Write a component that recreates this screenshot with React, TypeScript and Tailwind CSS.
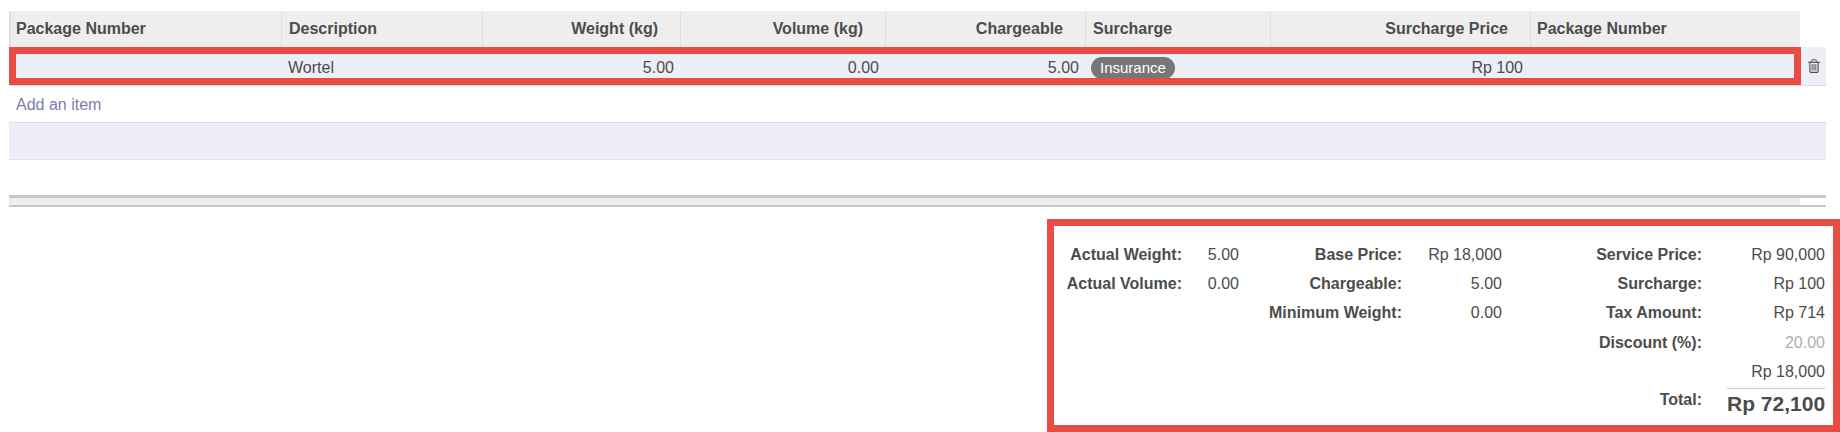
const font = "[font-family:'Liberation_Sans',Arial,sans-serif]";

const headers = [
  { label: 'Package Number', width: 'w-[271px]', right: false },
  { label: 'Description', width: 'w-[201px]', right: false },
  { label: 'Weight (kg)', width: 'w-[198px]', right: true },
  { label: 'Volume (kg)', width: 'w-[205px]', right: true },
  { label: 'Chargeable', width: 'w-[200px]', right: true },
  { label: 'Surcharge', width: 'w-[185px]', right: false },
  { label: 'Surcharge Price', width: 'w-[260px]', right: true },
  { label: 'Package Number', width: 'w-[269px]', right: false },
];

function TrashIcon() {
  // fa-trash-o, drawn by hand
  return (
    <svg width="12" height="14" viewBox="0 0 13 15" fill="none" className="-mt-[3px] text-[#4c4c4c]" aria-hidden="true">
      <path d="M0.3 3.5H12.7" stroke="currentColor" strokeWidth="1.3" />
      <path d="M4 3.5V1.5C4 1 4.4 0.7 4.8 0.7H8.2C8.6 0.7 9 1 9 1.5V3.5" stroke="currentColor" />
      <path d="M2 3.5V13C2 13.8 2.5 14.4 3.2 14.4H9.8C10.5 14.4 11 13.8 11 13V3.5" stroke="currentColor" strokeWidth="1.2" />
      <path d="M4.5 5.5V12.5M6.5 5.5V12.5M8.5 5.5V12.5" stroke="currentColor" />
    </svg>
  );
}

function Label({ children }: { children?: React.ReactNode }) {
  return <div className="text-right font-bold leading-[20px]">{children}</div>;
}

function Value({ children, muted }: { children?: React.ReactNode; muted?: boolean }) {
  return <div className={`text-right leading-[20px] ${muted ? 'text-[#b0adab]' : ''}`}>{children}</div>;
}

export default function App() {
  return (
    <div className={`${font} relative h-[432px] w-[1840px] overflow-hidden bg-white pt-[11px] pl-[9px] text-[16px] text-[#4c4c4c]`}>
      {/* Order lines */}
      <div className="flex h-[36px] w-[1791px] border-l-[2px] border-[#e0e0e0] bg-[#eeeeee] font-bold">
        {headers.map((h, i) => (
          <div
            key={i}
            className={`${h.width} flex shrink-0 items-center border-r border-[#dfdfdf] pl-[7px] first:pl-[5px] last:border-r-0 last:pl-[6px] ${h.right ? 'justify-end pr-[22px]' : ''}`}
          >
            {h.label}
          </div>
        ))}
      </div>

      <div className="flex h-[39px] w-[1817px] items-center border-b border-[#dfdfe6] bg-[#edeef6] pt-[3px]">
        <div className="w-[273px] shrink-0" />
        <div className="w-[201px] shrink-0 pl-[6px]">Wortel</div>
        <div className="w-[198px] shrink-0 pr-[7px] text-right">5.00</div>
        <div className="w-[205px] shrink-0 pr-[7px] text-right">0.00</div>
        <div className="w-[200px] shrink-0 pr-[7px] text-right">5.00</div>
        <div className="w-[185px] shrink-0 pl-[5px]">
          <span className="inline-block h-[22px] rounded-full bg-[#777777] px-[9px] text-[15px] leading-[22px] text-white">Insurance</span>
        </div>
        <div className="w-[260px] shrink-0 pr-[8px] text-right">Rp 100</div>
        <div className="w-[269px] shrink-0" />
        <div className="flex flex-1 justify-center pl-[1px]">
          <TrashIcon />
        </div>
      </div>

      <div className="flex h-[36px] items-center pt-[1px] pl-[7px] text-[#7c7bad]">Add an item</div>

      <div className="h-[38px] w-[1817px] border-y border-[#dfdfe6] bg-[#edeef6]" />

      <div className="mt-[35px] h-[12px] w-[1817px] border-t-[3px] border-b-[2px] border-[#c8c8c8]">
        <div className="h-full w-[1791px] bg-[#eeeeee]" />
      </div>

      {/* Totals */}
      <div className="mt-[33px] ml-[1045px] grid w-[771px] grid-cols-[128px_57px_163px_100px_200px_123px] auto-rows-[29.3px] items-center">
        <Label>Actual Weight:</Label>
        <Value>5.00</Value>
        <Label>Base Price:</Label>
        <Value>Rp 18,000</Value>
        <Label>Service Price:</Label>
        <Value>Rp 90,000</Value>

        <Label>Actual Volume:</Label>
        <Value>0.00</Value>
        <Label>Chargeable:</Label>
        <Value>5.00</Value>
        <Label>Surcharge:</Label>
        <Value>Rp 100</Value>

        <div />
        <div />
        <Label>Minimum Weight:</Label>
        <Value>0.00</Value>
        <Label>Tax Amount:</Label>
        <Value>Rp 714</Value>

        <div className="col-start-5">
          <Label>Discount (%):</Label>
        </div>
        <Value muted>20.00</Value>

        <div className="col-start-6">
          <Value>Rp 18,000</Value>
        </div>

        <div className="col-start-5 self-start pt-[4px]">
          <Label>Total:</Label>
        </div>
        <div className="mt-[2px] ml-[25px] self-start border-t border-[#c8c8c8] pt-[3px] text-right text-[21px] leading-[24px] font-bold whitespace-nowrap">
          Rp 72,100
        </div>
      </div>

      {/* Red annotation boxes */}
      <div className="absolute top-[47px] left-[9px] h-[38px] w-[1792px] border-[7px] border-[#e94c44]" />
      <div className="absolute top-[219px] left-[1047px] h-[213px] w-[793px] border-[7px] border-[#e94c44]" />
    </div>
  );
}
